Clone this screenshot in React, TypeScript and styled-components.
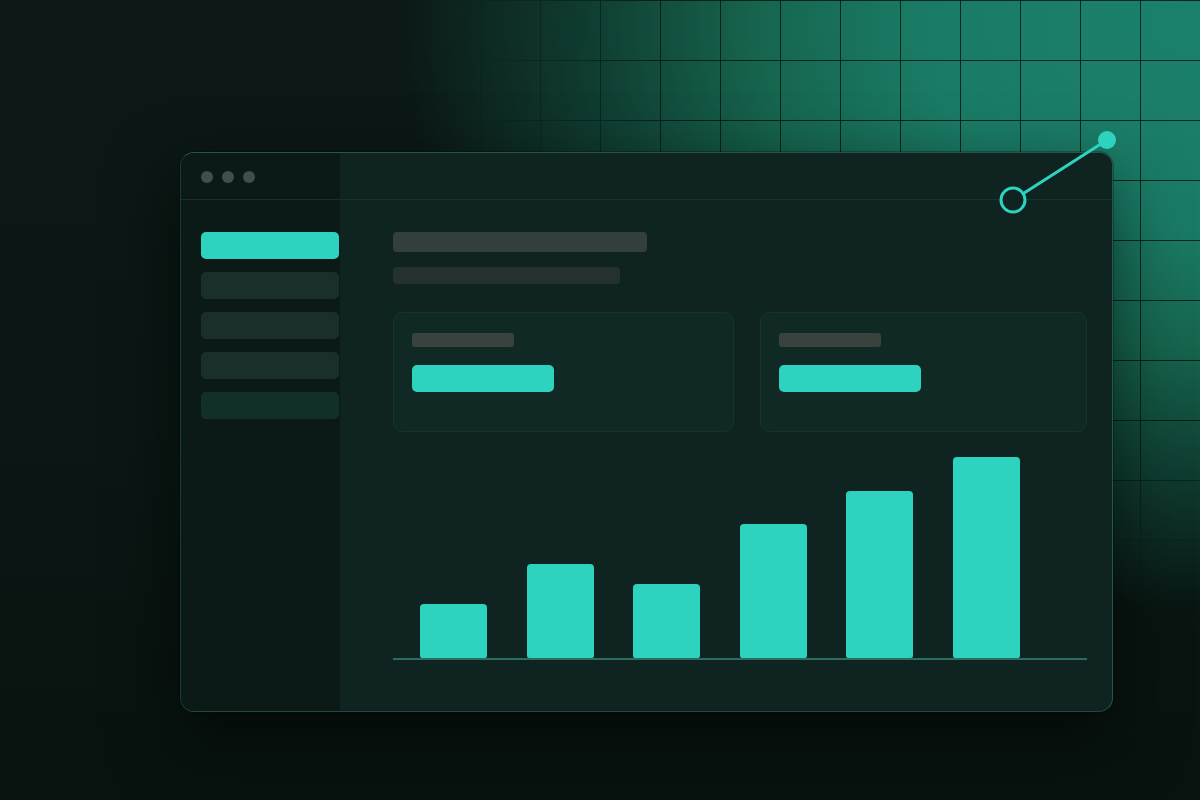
import * as React from "react";
import styled, { createGlobalStyle } from "styled-components";

const TEAL = "#2ed3bf";

const GlobalStyle = createGlobalStyle`
  html, body {
    margin: 0;
    padding: 0;
    background: #0a1613;
    font-family: "Inter", "Liberation Sans", sans-serif;
  }
  * {
    box-sizing: border-box;
  }
`;

const Page = styled.div`
  position: relative;
  width: 1200px;
  height: 800px;
  overflow: hidden;
  padding: 152px 0 0 180px;
  background: linear-gradient(180deg, #0c1916 0%, #0a1714 55%, #07130f 100%);
`;

// teal glow with grid lines in the upper right, behind the window
const Glow = styled.div`
  position: absolute;
  inset: 0;
  background: radial-gradient(
    ellipse 800px 590px at 1200px 20px,
    #1b816c 0%,
    #1a7b65 35%,
    #16654f 55%,
    #0f3a30 78%,
    rgba(12, 25, 22, 0) 100%
  );
`;

const Grid = styled.div`
  position: absolute;
  inset: 0;
  background-image: linear-gradient(
      to right,
      rgba(6, 24, 19, 0.85) 1px,
      transparent 1px
    ),
    linear-gradient(to bottom, rgba(6, 24, 19, 0.85) 1px, transparent 1px);
  background-size: 60px 60px;
  background-position: 0 0;
  -webkit-mask-image: radial-gradient(
    ellipse 760px 590px at 1200px 20px,
    #000 0%,
    #000 72%,
    transparent 100%
  );
  mask-image: radial-gradient(
    ellipse 760px 590px at 1200px 20px,
    #000 0%,
    #000 72%,
    transparent 100%
  );
`;

const Window = styled.div`
  position: relative;
  width: 933px;
  height: 560px;
  border-radius: 14px;
  border: 1px solid #1b3c35;
  border-top-color: #24574b;
  border-right-color: #245a4d;
  border-bottom-color: #21493f;
  background: #0f2320;
  box-shadow: 0 24px 70px rgba(0, 0, 0, 0.55), 0 0 0 1px rgba(0, 0, 0, 0.25);
`;

const Frame = styled.div`
  display: grid;
  grid-template-columns: 159px 1fr;
  grid-template-rows: 47px 1fr;
  width: 100%;
  height: 100%;
  border-radius: 13px;
  overflow: hidden;
`;

const TitleBar = styled.div<{ $side?: boolean }>`
  display: flex;
  align-items: center;
  gap: 9px;
  padding: 1px 0 0 20px;
  background: ${(p) => (p.$side ? "#0b1a17" : "#0f2320")};
  border-bottom: 1px solid #17312b;
`;

const Dot = styled.span`
  width: 12px;
  height: 12px;
  border-radius: 50%;
  background: #434e4b;
`;

const Sidebar = styled.nav`
  display: flex;
  flex-direction: column;
  gap: 13px;
  padding: 32px 0 0 20px;
  background: #0b1a17;
`;

const NavItem = styled.div<{ $tone: "active" | "muted" | "deep" }>`
  width: 138px;
  height: 27px;
  border-radius: 5px;
  background: ${(p) =>
    p.$tone === "active" ? TEAL : p.$tone === "deep" ? "#11302a" : "#1a2f2b"};
`;

const Main = styled.main`
  display: flex;
  flex-direction: column;
  padding: 32px 25px 0 53px;
`;

const Heading = styled.div`
  width: 254px;
  height: 20px;
  border-radius: 4px;
  background: #333f3c;
`;

const SubHeading = styled.div`
  width: 227px;
  height: 17px;
  margin-top: 15px;
  border-radius: 4px;
  background: #25312e;
`;

const Cards = styled.div`
  display: grid;
  grid-template-columns: 341px 1fr;
  gap: 26px;
  margin-top: 28px;
`;

const Card = styled.div`
  display: flex;
  flex-direction: column;
  gap: 18px;
  height: 120px;
  padding: 20px 18px;
  border-radius: 10px;
  background: #112925;
  border: 1px solid #17332d;
`;

const CardLabel = styled.div`
  width: 102px;
  height: 14px;
  border-radius: 3px;
  background: #38433f;
`;

const CardValue = styled.div`
  width: 142px;
  height: 27px;
  border-radius: 5px;
  background: ${TEAL};
`;

const Chart = styled.div`
  display: flex;
  align-items: flex-end;
  gap: 39.6px;
  height: 228px;
  padding-left: 27px;
  border-bottom: 2px solid #2a6e60;
`;

const Bar = styled.div`
  width: 67px;
  border-radius: 4px 4px 2px 2px;
  background: ${TEAL};
`;

const Connector = styled.svg`
  position: absolute;
  left: 799px;
  top: -31px;
  overflow: visible;
`;

const bars = [54, 94, 74, 134, 167, 201];

function App(): React.ReactElement {
  return (
    <>
      <GlobalStyle />
      <Page>
        <Glow />
        <Grid />
        <Window>
          <Frame>
            <TitleBar $side>
              <Dot />
              <Dot />
              <Dot />
            </TitleBar>
            <TitleBar />
            <Sidebar>
              <NavItem $tone="active" />
              <NavItem $tone="muted" />
              <NavItem $tone="muted" />
              <NavItem $tone="muted" />
              <NavItem $tone="deep" />
            </Sidebar>
            <Main>
              <Heading />
              <SubHeading />
              <Cards>
                <Card>
                  <CardLabel />
                  <CardValue />
                </Card>
                <Card>
                  <CardLabel />
                  <CardValue />
                </Card>
              </Cards>
              <Chart>
                {bars.map((h, i) => (
                  <Bar key={i} style={{ height: h }} />
                ))}
              </Chart>
            </Main>
          </Frame>
          <Connector width="150" height="110" viewBox="0 0 150 110">
            <line
              x1="44.5"
              y1="70.7"
              x2="127"
              y2="18"
              stroke={TEAL}
              strokeWidth="3"
              strokeLinecap="round"
            />
            <circle
              cx="33"
              cy="78"
              r="12"
              fill="#0f2320"
              stroke={TEAL}
              strokeWidth="3"
            />
            <circle cx="127" cy="18" r="9" fill={TEAL} />
          </Connector>
        </Window>
      </Page>
    </>
  );
}

export default App;
